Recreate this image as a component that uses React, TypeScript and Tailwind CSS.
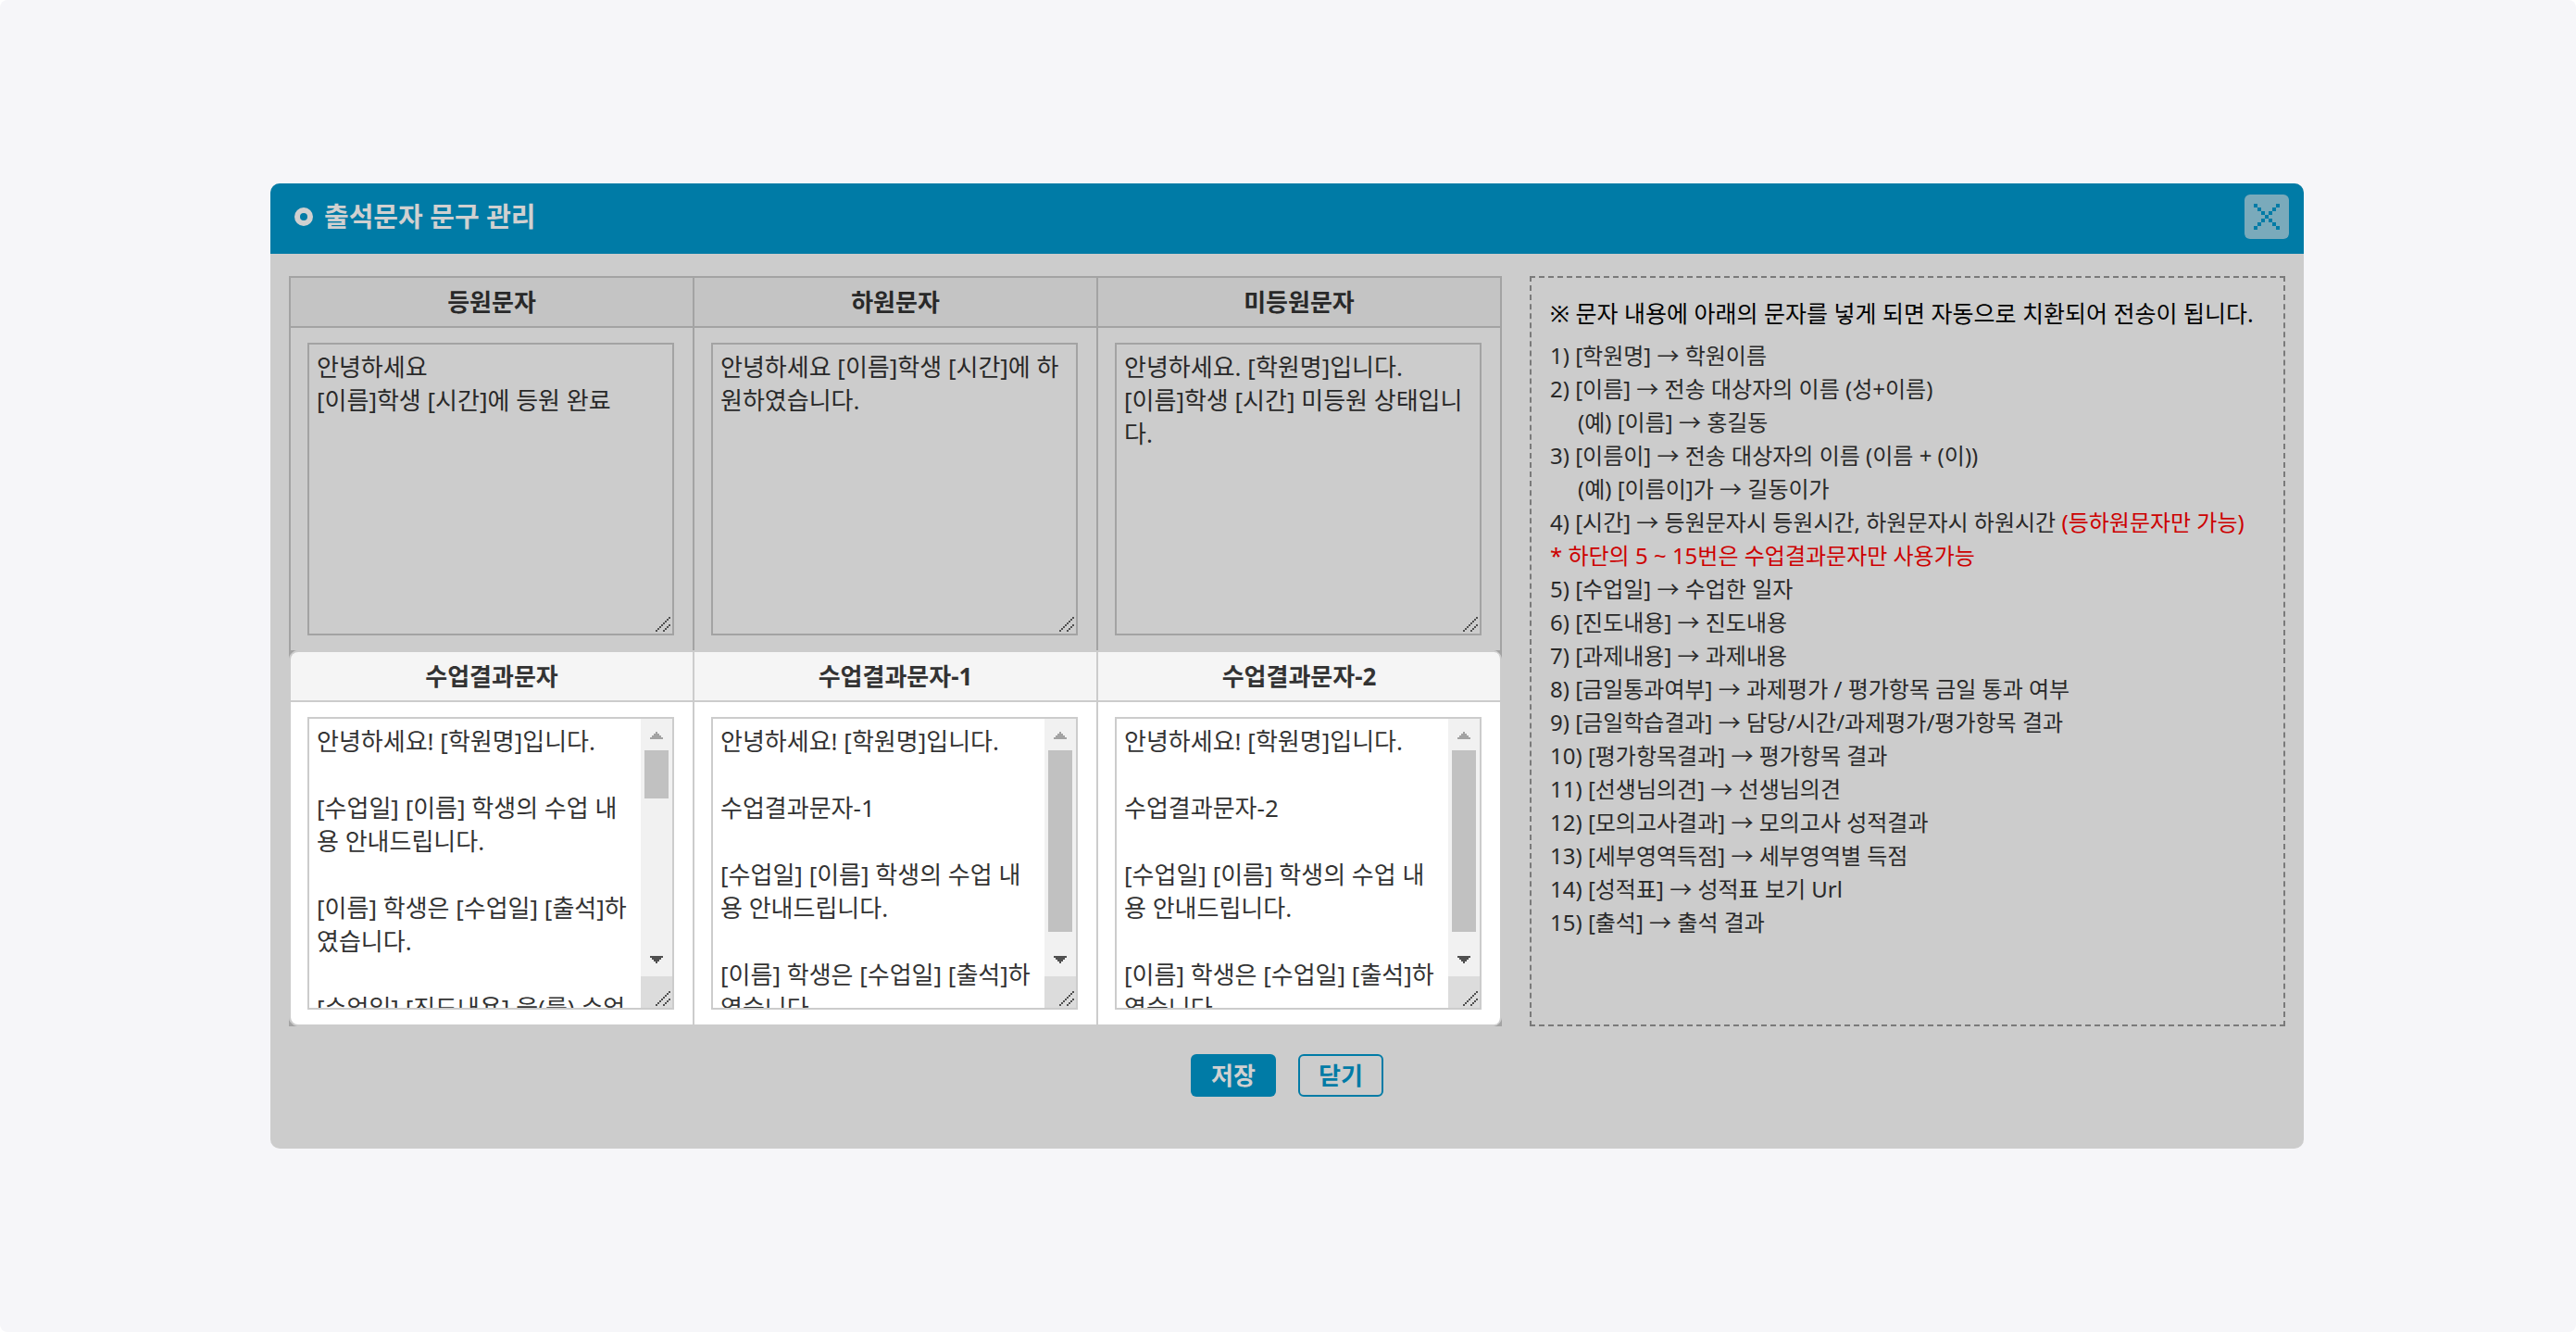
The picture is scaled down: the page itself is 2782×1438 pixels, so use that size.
const ATTENDANCE = [
  { id: 'arrive', title: '등원문자', text: '안녕하세요\n[이름]학생 [시간]에 등원 완료' },
  { id: 'leave', title: '하원문자', text: '안녕하세요 [이름]학생 [시간]에 하원하였습니다.' },
  { id: 'absent', title: '미등원문자', text: '안녕하세요. [학원명]입니다.\n[이름]학생 [시간] 미등원 상태입니다.' },
];

const RESULTS = [
  {
    id: 'result',
    title: '수업결과문자',
    text: '안녕하세요! [학원명]입니다.\n\n[수업일] [이름] 학생의 수업 내용 안내드립니다.\n\n[이름] 학생은 [수업일] [출석]하였습니다.\n\n[수업일] [진도내용] 을(를) 수업',
    long: true,
  },
  {
    id: 'result1',
    title: '수업결과문자-1',
    text: '안녕하세요! [학원명]입니다.\n\n수업결과문자-1\n\n[수업일] [이름] 학생의 수업 내용 안내드립니다.\n\n[이름] 학생은 [수업일] [출석]하였습니다.',
    long: false,
  },
  {
    id: 'result2',
    title: '수업결과문자-2',
    text: '안녕하세요! [학원명]입니다.\n\n수업결과문자-2\n\n[수업일] [이름] 학생의 수업 내용 안내드립니다.\n\n[이름] 학생은 [수업일] [출석]하였습니다.',
    long: false,
  },
];

const GUIDE = [
  { text: '1) [학원명] → 학원이름' },
  { text: '2) [이름] → 전송 대상자의 이름 (성+이름)' },
  { text: '(예) [이름] → 홍길동', indent: true },
  { text: '3) [이름이] → 전송 대상자의 이름 (이름 + (이))' },
  { text: '(예) [이름이]가 → 길동이가', indent: true },
  { text: '4) [시간] → 등원문자시 등원시간, 하원문자시 하원시간 ', note: '(등하원문자만 가능)' },
  { text: '', note: '* 하단의 5 ~ 15번은 수업결과문자만 사용가능' },
  { text: '5) [수업일] → 수업한 일자' },
  { text: '6) [진도내용] → 진도내용' },
  { text: '7) [과제내용] → 과제내용' },
  { text: '8) [금일통과여부] → 과제평가 / 평가항목 금일 통과 여부' },
  { text: '9) [금일학습결과] → 담당/시간/과제평가/평가항목 결과' },
  { text: '10) [평가항목결과] → 평가항목 결과' },
  { text: '11) [선생님의견] → 선생님의견' },
  { text: '12) [모의고사결과] → 모의고사 성적결과' },
  { text: '13) [세부영역득점] → 세부영역별 득점' },
  { text: '14) [성적표] → 성적표 보기 Url' },
  { text: '15) [출석] → 출석 결과' },
];

function Grip() {
  return (
    <svg aria-hidden="true" viewBox="0 0 9 9" className="size-[18px]" shapeRendering="crispEdges" fill="#505050">
      {[0, 1, 2, 3, 4, 5, 6, 7].map((i) => (
        <rect key={i} x={i} y={7 - i} width="1" height="1" />
      ))}
      {[0, 1, 2, 3].map((i) => (
        <rect key={i} x={4 + i} y={7 - i} width="1" height="1" />
      ))}
    </svg>
  );
}

function Scrollbar({ long }: { long: boolean }) {
  return (
    <div className="flex w-[34px] shrink-0 flex-col bg-[#f1f1f1]" aria-hidden="true">
      <svg viewBox="0 0 17 17" className="size-[34px]" shapeRendering="crispEdges" fill="#a3a3a3">
        <path d="M8 7h1v1h1v1h1v1h1v1H5v-1h1V9h1V8h1z" />
      </svg>
      <div className="flex-1 px-1">
        <div className={long ? 'h-[52px] bg-[#c1c1c1]' : 'h-[196px] bg-[#c1c1c1]'} />
      </div>
      <svg viewBox="0 0 17 17" className="size-[34px]" shapeRendering="crispEdges" fill="#505050">
        <path d="M5 6h7v1h-1v1h-1v1H9v1H8V9H7V8H6V7H5z" />
      </svg>
      <div className="flex h-[34px] items-end justify-end bg-[#dcdcdc]">
        <Grip />
      </div>
    </div>
  );
}

export default function App() {
  return (
    <main className="flex min-h-screen flex-col justify-center rounded-lg bg-[#f6f6f9] pr-0.5 font-['Noto_Sans','Noto_Sans_CJK_KR',sans-serif] text-[26px] leading-[36px] text-[#292929]">
      <section aria-labelledby="dialog-title" className="mx-auto w-full max-w-[2196px] overflow-hidden rounded-[10px] bg-[#cccccc]">
        <header className="flex h-[76px] items-center justify-between bg-[#007ba6] pb-1 pl-[26px] pr-4">
          <div className="flex items-center gap-3 text-[#d0d0d0]">
            <svg aria-hidden="true" viewBox="0 0 20 20" className="size-5">
              <circle cx="10" cy="10" r="7" fill="none" stroke="currentColor" strokeWidth="6" />
            </svg>
            <h1 id="dialog-title" className="text-[29px] font-bold">출석문자 문구 관리</h1>
          </div>
          <button type="button" aria-label="창 닫기" className="flex size-12 items-center justify-center rounded-md bg-[#7aaabb]">
            <svg aria-hidden="true" viewBox="0 0 7 7" className="size-7" shapeRendering="crispEdges" fill="#007ba6">
              {[0, 1, 2, 3, 4, 5, 6].map((i) => (
                <g key={i}>
                  <rect x={i} y={i} width="1" height="1" />
                  <rect x={6 - i} y={i} width="1" height="1" />
                </g>
              ))}
            </svg>
          </button>
        </header>

        <form className="px-5 pb-14 pt-6" onSubmit={(e) => e.preventDefault()}>
          <div className="grid grid-cols-[minmax(0,1310fr)_minmax(0,816fr)] gap-[30px]">
            <div>
              <table className="w-full table-fixed border-separate border-spacing-0 border-l-2 border-t-2 border-[#a3a3a3]">
                <thead>
                  <tr>
                    {ATTENDANCE.map((m) => (
                      <th key={m.id} scope="col" className="h-[54px] border-b-2 border-r-2 border-[#a3a3a3] bg-[#c4c4c4] p-0 font-bold">
                        <label htmlFor={m.id}>{m.title}</label>
                      </th>
                    ))}
                  </tr>
                </thead>
                <tbody>
                  <tr>
                    {ATTENDANCE.map((m) => (
                      <td key={m.id} className="border-r-2 border-[#a3a3a3] py-4 pl-[18px] pr-5">
                        <div className="relative h-[316px] border-2 border-[#a3a3a3]">
                          <textarea id={m.id} defaultValue={m.text} className="block size-full resize-none overflow-hidden px-2 py-1.5" />
                          <div className="pointer-events-none absolute bottom-0 right-0">
                            <Grip />
                          </div>
                        </div>
                      </td>
                    ))}
                  </tr>
                </tbody>
              </table>
              <div className="bg-[#a3a3a3]">
                <div className="overflow-hidden rounded-[10px] bg-[#cccccc] text-[#333333]">
                  <table className="w-full table-fixed border-separate border-spacing-0 border-y-2 border-l-2 border-[#cccccc]">
                    <thead>
                      <tr>
                        {RESULTS.map((m) => (
                          <th key={m.id} scope="col" className="h-[54px] border-b-2 border-r-2 border-[#cccccc] bg-[#f5f5f5] p-0 font-bold first:rounded-tl-lg last:rounded-tr-lg">
                            <label htmlFor={m.id}>{m.title}</label>
                          </th>
                        ))}
                      </tr>
                    </thead>
                    <tbody>
                      <tr>
                        {RESULTS.map((m) => (
                          <td key={m.id} className="border-r-2 border-[#cccccc] bg-white py-4 pl-[18px] pr-5 first:rounded-bl-lg last:rounded-br-lg">
                            <div className="flex h-[316px] border-2 border-[#cccccc]">
                              <textarea id={m.id} defaultValue={m.text} className="min-w-0 flex-1 resize-none overflow-hidden px-2 py-1.5" />
                              <Scrollbar long={m.long} />
                            </div>
                          </td>
                        ))}
                      </tr>
                    </tbody>
                  </table>
                </div>
              </div>
            </div>

            <aside className="border-2 border-dashed border-[#7a7a7a] px-5 py-5">
              <p className="mb-[10px] text-[25px] text-black">※ 문자 내용에 아래의 문자를 넣게 되면 자동으로 치환되어 전송이 됩니다.</p>
              <ul className="text-2xl/[36px]">
                {GUIDE.map((g, i) => (
                  <li key={i} className={g.indent ? 'pl-[30px]' : undefined}>
                    {g.text}
                    {g.note && <span className="text-[#cc0000]">{g.note}</span>}
                  </li>
                ))}
              </ul>
            </aside>
          </div>

          <div className="mt-[30px] flex justify-center gap-6 font-bold">
            <button type="submit" className="flex h-[46px] w-[92px] items-center justify-center rounded-md bg-[#007ba6] text-[#d0d0d0]">저장</button>
            <button type="button" className="flex h-[46px] w-[92px] items-center justify-center rounded-md border-2 border-[#007ba6] text-[#007ba6]">닫기</button>
          </div>
        </form>
      </section>
    </main>
  );
}
